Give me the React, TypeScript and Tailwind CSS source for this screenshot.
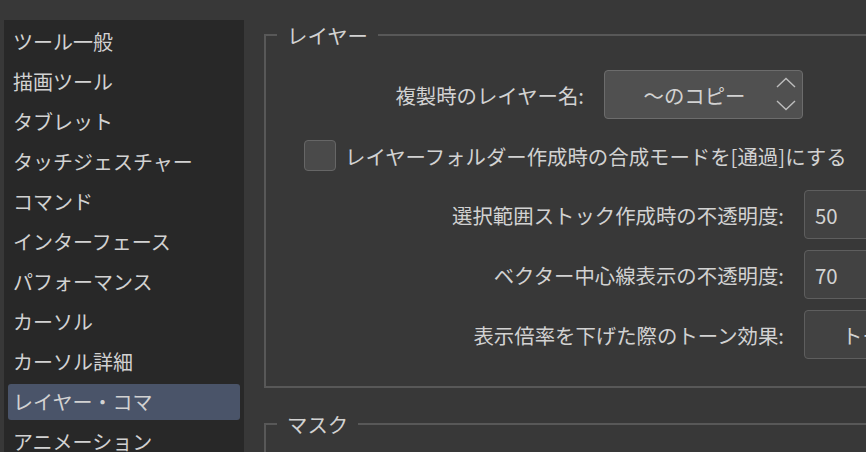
import React from "react";

const items = [
  "ツール一般",
  "描画ツール",
  "タブレット",
  "タッチジェスチャー",
  "コマンド",
  "インターフェース",
  "パフォーマンス",
  "カーソル",
  "カーソル詳細",
  "レイヤー・コマ",
  "アニメーション",
];

const font = { fontFamily: '"Noto Sans CJK JP", "Noto Sans", sans-serif' };

function Chevrons() {
  return (
    <svg width="20" height="36" viewBox="0 0 20 36" className="shrink-0">
      <polyline points="1,10 10,1.5 19,10" fill="none" stroke="#bdbdbd" strokeWidth="1.4" />
      <polyline points="1,24 10,32.5 19,24" fill="none" stroke="#bdbdbd" strokeWidth="1.4" />
    </svg>
  );
}

export default function App() {
  return (
    <div
      className="w-[866px] h-[452px] overflow-hidden bg-[#383838] text-[#d2d2d2] text-[20px] leading-[28px] flex items-start"
      style={font}
    >
      {/* Sidebar */}
      <div className="ml-[4px] mt-[20px] w-[240px] h-[500px] bg-[#282828] pt-[2px] shrink-0">
        {items.map((it) => (
          <div key={it} className="h-[40px] px-[4px] py-[2px]">
            <div
              className={
                "h-[36px] rounded-[3px] pl-[5px] flex items-center whitespace-nowrap " +
                (it === "レイヤー・コマ" ? "bg-[#4a5469]" : "")
              }
            >
              {it}
            </div>
          </div>
        ))}
      </div>

      {/* Main */}
      <div className="ml-[20px] mt-[21px] w-[800px] shrink-0 flex flex-col text-[20.4px]">
        <fieldset className="border-2 border-[#585858] pb-[27px]">
          <legend className="ml-[11px] px-[10px] leading-[28px]">レイヤー</legend>

          {/* Row 1 */}
          <div className="mt-[21px] flex items-center h-[49px]">
            <div className="w-[318px] text-right whitespace-nowrap">複製時のレイヤー名:</div>
            <div className="ml-[20px] w-[199px] h-[49px] rounded-[4px] bg-[#505050] border border-[#6c6c6c] flex items-center pr-[6px]">
              <div className="flex-1 text-center pl-[8px]">〜のコピー</div>
              <Chevrons />
            </div>
          </div>

          {/* Row 2 */}
          <div className="mt-[21px] flex items-center h-[31px] pl-[38px]">
            <div className="w-[32px] h-[31px] rounded-[4px] bg-[#4a4a4a] border border-[#666666] shrink-0" />
            <div className="ml-[9px] whitespace-nowrap">レイヤーフォルダー作成時の合成モードを[通過]にする</div>
          </div>

          {/* Row 3 */}
          <div className="mt-[19px] flex items-center h-[49px]">
            <div className="w-[518px] text-right whitespace-nowrap">選択範囲ストック作成時の不透明度:</div>
            <div className="ml-[20px] w-[140px] h-[49px] rounded-[4px] bg-[#424242] border border-[#5e5e5e] flex items-center pl-[10px]">
              50
            </div>
          </div>

          {/* Row 4 */}
          <div className="mt-[11px] flex items-center h-[49px]">
            <div className="w-[518px] text-right whitespace-nowrap">ベクター中心線表示の不透明度:</div>
            <div className="ml-[20px] w-[140px] h-[49px] rounded-[4px] bg-[#424242] border border-[#5e5e5e] flex items-center pl-[10px]">
              70
            </div>
          </div>

          {/* Row 5 */}
          <div className="mt-[11px] flex items-center h-[49px]">
            <div className="w-[518px] text-right whitespace-nowrap">表示倍率を下げた際のトーン効果:</div>
            <div className="ml-[20px] w-[199px] h-[49px] rounded-[4px] bg-[#424242] border border-[#5e5e5e] flex items-center pl-[37px] whitespace-nowrap">
              トーン
            </div>
          </div>
        </fieldset>

        <fieldset className="mt-[22px] border-2 border-[#585858] h-[120px]">
          <legend className="ml-[11px] px-[10px] leading-[28px]">マスク</legend>
        </fieldset>
      </div>
    </div>
  );
}
